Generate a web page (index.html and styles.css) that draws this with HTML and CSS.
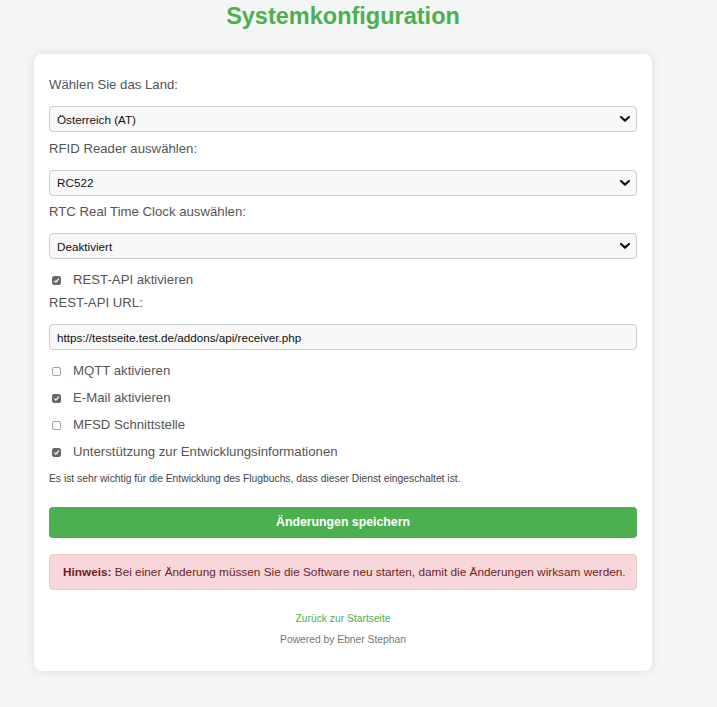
FILE: index.html
```html
<!DOCTYPE html>
<html lang="de">
<head>
<meta charset="utf-8">
<title>Systemkonfiguration</title>
<link rel="stylesheet" href="styles.css">
</head>
<body>
<div class="page">
  <h1 class="title">Systemkonfiguration</h1>
  <div class="card">
    <form class="form">
      <label class="field-label" for="land">Wählen Sie das Land:</label>
      <select id="land" class="field">
        <option>Österreich (AT)</option>
      </select>

      <label class="field-label" for="rfid">RFID Reader auswählen:</label>
      <select id="rfid" class="field">
        <option>RC522</option>
      </select>

      <label class="field-label" for="rtc">RTC Real Time Clock auswählen:</label>
      <select id="rtc" class="field">
        <option>Deaktiviert</option>
      </select>

      <label class="check check-first"><input type="checkbox" checked> REST-API aktivieren</label>
      <label class="field-label field-label-after-check" for="url">REST-API URL:</label>
      <input id="url" class="field" type="text" value="https://testseite.test.de/addons/api/receiver.php">

      <label class="check check-after-input"><input type="checkbox"> MQTT aktivieren</label>
      <label class="check"><input type="checkbox" checked> E-Mail aktivieren</label>
      <label class="check"><input type="checkbox"> MFSD Schnittstelle</label>
      <label class="check"><input type="checkbox" checked> Unterstützung zur Entwicklungsinformationen</label>
      <p class="note">Es ist sehr wichtig für die Entwicklung des Flugbuchs, dass dieser Dienst eingeschaltet ist.</p>

      <button type="button" class="save">Änderungen speichern</button>

      <div class="alert"><strong>Hinweis:</strong> Bei einer Änderung müssen Sie die Software neu starten, damit die Änderungen wirksam werden.</div>

      <a class="back" href="#">Zurück zur Startseite</a>
      <p class="powered">Powered by Ebner Stephan</p>
    </form>
  </div>
</div>
</body>
</html>
```

FILE: styles.css
```css
* { box-sizing: border-box; }

html, body {
  margin: 0;
  padding: 0;
}

body {
  background: #f4f5f5;
  font-family: "Liberation Sans", Arial, sans-serif;
  color: #555;
}

.page {
  width: 618px;
  margin-left: 34px;
  padding-bottom: 37px;
}

.title {
  margin: 0;
  font-size: 23.5px;
  line-height: 32px;
  font-weight: bold;
  color: #4caf50;
  text-align: center;
}

.card {
  margin-top: 22px;
  background: #fff;
  border-radius: 8px;
  box-shadow: 0 0 10px rgba(0, 0, 0, 0.1);
  padding: 23px 15px 24px;
}

.form {
  display: flex;
  flex-direction: column;
}

.field-label {
  display: block;
  font-size: 13.2px;
  line-height: 16px;
  color: #555;
  margin-top: 8.5px;
}

.field-label:first-child {
  margin-top: 0;
}

.field-label-after-check {
  margin-top: 7px;
}

.field {
  display: block;
  width: 100%;
  height: 26px;
  margin: 13px 0 0;
  padding: 0 7px;
  border: 1px solid #ccc;
  border-radius: 4px;
  background-color: #f8f8f8;
  font-family: "Liberation Sans", Arial, sans-serif;
  font-size: 11.7px;
  color: #111;
  -webkit-appearance: none;
  appearance: none;
  outline: none;
}

select.field {
  background-image: url("data:image/svg+xml,%3Csvg xmlns='http://www.w3.org/2000/svg' width='10' height='6' viewBox='0 0 10 6'%3E%3Cpath d='M1 1 L5 4.6 L9 1' fill='none' stroke='%23111' stroke-width='2.2' stroke-linecap='round' stroke-linejoin='round'/%3E%3C/svg%3E");
  background-repeat: no-repeat;
  background-position: right 6px center;
  background-size: 10px 6px;
}

.check {
  display: flex;
  align-items: center;
  font-size: 13.2px;
  line-height: 16px;
  color: #555;
  margin-top: 11px;
}

.check input {
  -webkit-appearance: none;
  appearance: none;
  width: 9px;
  height: 9px;
  margin: 0 12px 0 3px;
  border: 1px solid #a0a0a0;
  border-radius: 2px;
  background: #fff;
  flex: none;
}

.check input:checked {
  border-color: #6a6a6a;
  background-color: #6a6a6a;
  background-image: url("data:image/svg+xml,%3Csvg xmlns='http://www.w3.org/2000/svg' width='7' height='7' viewBox='0 0 7 7'%3E%3Cpath d='M1.2 3.6 L2.9 5.2 L5.9 1.6' fill='none' stroke='%23fff' stroke-width='1.2'/%3E%3C/svg%3E");
  background-repeat: no-repeat;
  background-position: center;
  background-size: 7px 7px;
}

.check-first {
  margin-top: 13px;
}

.check-after-input {
  margin-top: 13px;
}

.note {
  margin: 12px 0 0;
  font-size: 10.3px;
  line-height: 14px;
  color: #444;
}

.save {
  display: block;
  width: 100%;
  height: 31px;
  margin-top: 20.5px;
  border: none;
  border-radius: 4px;
  background: #4caf50;
  color: #fff;
  font-family: "Liberation Sans", Arial, sans-serif;
  font-size: 12.3px;
  font-weight: bold;
  cursor: pointer;
}

.alert {
  margin-top: 16px;
  height: 36px;
  padding: 0 13px;
  background: #f8d7da;
  border: 1px solid #f5c6cb;
  border-radius: 4px;
  color: #721c24;
  font-size: 11.8px;
  line-height: 34px;
  white-space: nowrap;
}

.back {
  align-self: center;
  margin-top: 22px;
  font-size: 10.3px;
  line-height: 14px;
  color: #4caf50;
  text-decoration: none;
}

.powered {
  margin: 7px 0 0;
  text-align: center;
  font-size: 10.3px;
  line-height: 14px;
  color: #777;
}
```
